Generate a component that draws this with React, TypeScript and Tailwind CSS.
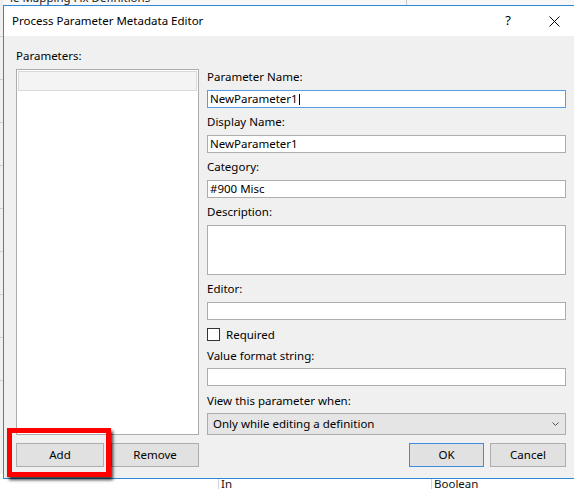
import type { ReactNode } from 'react'

const font = { fontFamily: '"Segoe UI", "Noto Sans", "Liberation Sans", sans-serif' }

function Label({ children, className = '' }: { children: ReactNode; className?: string }) {
  return <div className={`h-[16px] text-[11.5px] leading-[16px] text-black ${className}`}>{children}</div>
}

function TextBox({ value, focused, className = '' }: { value?: string; focused?: boolean; className?: string }) {
  return (
    <div
      className={`flex h-[18px] items-center bg-white px-[2px] text-[11.5px] leading-[16px] text-black border ${
        focused ? 'border-[#569de5]' : 'border-[#adadad]'
      } ${className}`}
    >
      {value}
      {focused && <span className="ml-px inline-block h-[11px] w-px bg-black" />}
    </div>
  )
}

function WinButton({ children, primary, className = '' }: { children: ReactNode; primary?: boolean; className?: string }) {
  return (
    <button
      type="button"
      className={`flex h-[24px] items-center justify-center bg-[#e1e1e1] text-[11.5px] text-black border ${
        primary ? 'border-[#3c8ddd]' : 'border-[#adadad]'
      } ${className}`}
    >
      {children}
    </button>
  )
}

export default function App() {
  return (
    <div className="relative h-[489px] w-[574px] overflow-hidden bg-white" style={font}>
      {/* app behind the dialog */}
      <div className="absolute left-0 top-0 flex h-[5px] w-full overflow-hidden bg-[#f7f7f7]">
        <div className="-mt-[10px] pl-[10px] text-[11.5px] leading-[16px] text-[#222]">le Mapping Fix Definitions</div>
        <div className="ml-auto mr-[167px] h-full w-px bg-[#c8c8c8]" />
      </div>
      <div className="absolute left-0 top-0 flex h-full w-[3px] flex-col bg-[#f0f0f0]">
        <div className="mt-[36px] h-px bg-[#d0d0d0]" />
        <div className="mt-[42px] h-px bg-[#d0d0d0]" />
        <div className="mt-[42px] h-px bg-[#d0d0d0]" />
        <div className="mt-[42px] h-px bg-[#d0d0d0]" />
        <div className="mt-[42px] h-px bg-[#d0d0d0]" />
        <div className="mt-[42px] h-px bg-[#d0d0d0]" />
        <div className="mt-[42px] h-px bg-[#d0d0d0]" />
        <div className="mt-[42px] h-px bg-[#d0d0d0]" />
        <div className="mt-[42px] h-px bg-[#d0d0d0]" />
      </div>
      <div className="absolute left-0 top-[474px] flex h-[15px] w-full bg-white text-[11.5px] leading-[16px] text-[#111]">
        <div className="w-[218px]" />
        <div className="w-[213px] border-l border-[#d5d5d5] pl-[2px] pt-[2px]">In</div>
        <div className="flex-1 border-l border-[#d5d5d5] pl-[2px] pt-[2px]">Boolean</div>
      </div>

      {/* dialog */}
      <div className="absolute left-[3px] top-[5px] flex h-[474px] w-[575px] flex-col border border-[#2b88d8] bg-[#f0f0f0]">
        <div className="flex h-[30px] shrink-0 items-center bg-white">
          <div className="pl-[8px] text-[11.5px] text-black">Process Parameter Metadata Editor</div>
          <div className="ml-auto flex h-full w-[46px] items-center justify-center text-[13px] text-black">?</div>
          <div className="flex h-full w-[46px] items-center justify-center">
            <svg width="11" height="11" viewBox="0 0 11 11" fill="none" stroke="#000" strokeWidth="1">
              <path d="M0.5 0.5L10.5 10.5M10.5 0.5L0.5 10.5" />
            </svg>
          </div>
        </div>

        <div className="flex gap-[8px] pl-[12px]">
          {/* left column */}
          <div className="flex w-[183px] flex-col pt-[12px]">
            <Label>Parameters:</Label>
            <div className="mt-[5px] h-[366px] border border-[#acacac] bg-white p-px">
              <div className="h-[20px] border border-[#d9d9d9] bg-[#f4f4f4]" />
            </div>
            <div className="mt-[8px] flex gap-[7px]">
              <WinButton className="flex-1">Add</WinButton>
              <WinButton className="flex-1">Remove</WinButton>
            </div>
          </div>

          {/* right column */}
          <div className="flex w-[359px] flex-col pt-[33px]">
            <Label className="mb-[5px]">Parameter Name:</Label>
            <TextBox value="NewParameter1" focused />

            <Label className="mb-[5px] mt-[6px]">Display Name:</Label>
            <TextBox value="NewParameter1" />

            <Label className="mb-[5px] mt-[6px]">Category:</Label>
            <TextBox value="#900 Misc" />

            <Label className="mb-[5px] mt-[6px]">Description:</Label>
            <div className="h-[50px] border border-[#adadad] bg-white" />

            <Label className="mb-[5px] mt-[6px]">Editor:</Label>
            <TextBox />

            <div className="mt-[8px] flex h-[13px] items-center gap-[6px]">
              <div className="h-[13px] w-[13px] border border-[#333] bg-white" />
              <span className="text-[11.5px] leading-[16px] text-black">Required</span>
            </div>

            <Label className="mb-[4px] mt-[7px]">Value format string:</Label>
            <TextBox />

            <Label className="mb-[4px] mt-[7px]">View this parameter when:</Label>
            <div className="flex h-[22px] items-center border border-[#acacac] bg-[#e5e5e5] pl-[5px] pr-[6px] text-[11.5px] text-black">
              <span>Only while editing a definition</span>
              <svg className="ml-auto" width="7" height="4" viewBox="0 0 7 4" fill="none" stroke="#555" strokeWidth="1">
                <path d="M0.5 0.5L3.5 3.5L6.5 0.5" />
              </svg>
            </div>

            <div className="mt-[8px] flex justify-end gap-[6px]">
              <WinButton primary className="w-[75px]">OK</WinButton>
              <WinButton className="w-[76px]">Cancel</WinButton>
            </div>
          </div>
        </div>
      </div>

      {/* highlight marker */}
      <div className="absolute left-[7px] top-[428px] h-[49px] w-[104px] border-[5px] border-[#ff0000] shadow-[2px_3px_3px_rgba(0,0,0,0.75)]" />
    </div>
  )
}
